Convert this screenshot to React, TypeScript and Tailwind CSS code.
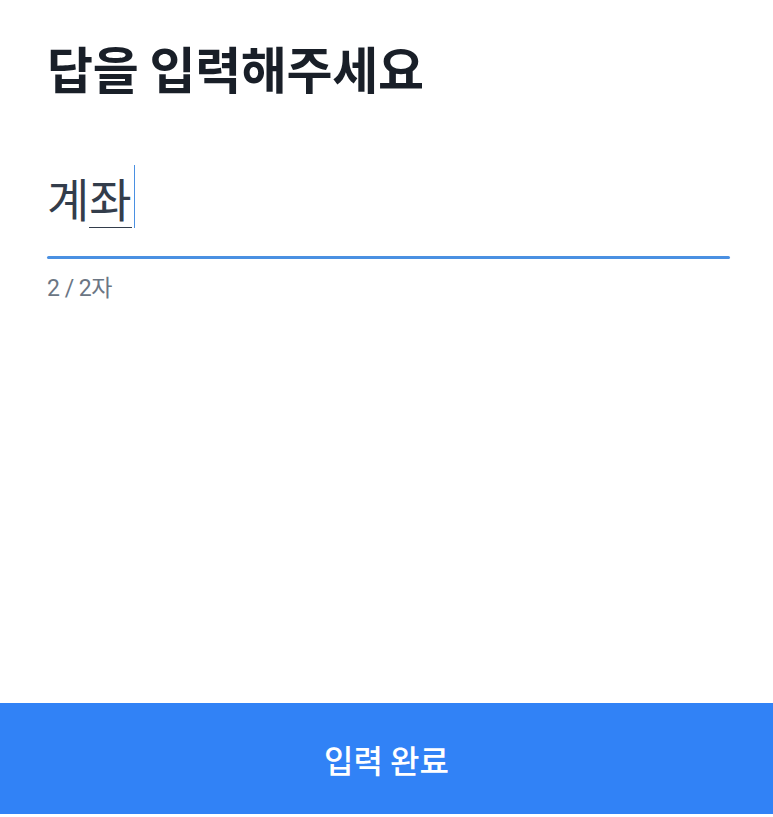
const App: React.FC = (): JSX.Element => {
  return (
    <div
      className="w-[773px] h-[817px] bg-white flex flex-col"
      style={{ fontFamily: '"Noto Sans CJK KR", "Noto Sans", sans-serif' }}
    >
      <div className="flex-1 px-[47px] pt-[33px]">
        <h1 className="text-[50px] leading-[68px] font-bold text-[#191f28] tracking-[-0.3px]">
          답을 입력해주세요
        </h1>
        <div className="mt-[64px] flex items-end">
          <span className="text-[46px] leading-[64px] text-[#333d4b]">계</span>
          <span className="relative text-[46px] leading-[64px] text-[#333d4b]">
            좌
            <span className="absolute left-0 right-0 bottom-[1px] h-[1px] bg-[#333d4b]"></span>
          </span>
          <span className="ml-[2px] w-[1px] h-[63px] bg-[#4a90e2] mb-[1px]"></span>
        </div>
        <div className="mt-[27px] w-[683px] h-[3px] bg-[#4a90e2] rounded-full"></div>
        <div
          className="mt-[15px] text-[23px] leading-[30px] text-[#6b7684] tracking-[-0.5px]"
          style={{ fontFamily: 'Roboto, "Noto Sans CJK KR", sans-serif' }}
        >
          2 / 2자
        </div>
      </div>
      <button className="h-[111px] mb-[3px] w-full bg-[#3182f6] text-white text-[32px] font-medium">
        입력 완료
      </button>
    </div>
  );
};

export default App;
